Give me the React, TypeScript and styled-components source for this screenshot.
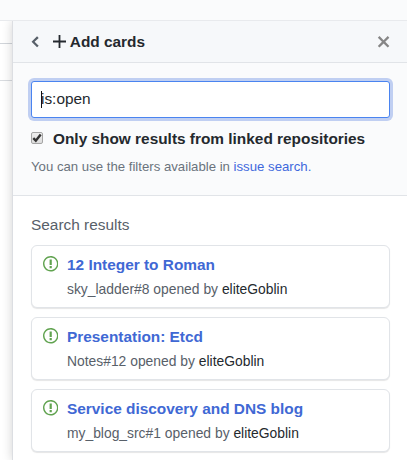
import React from "react";
import styled, { createGlobalStyle } from "styled-components";

const GlobalStyle = createGlobalStyle`
  * { box-sizing: border-box; }
  html, body { margin: 0; padding: 0; overflow: hidden; }
  body { font-family: "Liberation Sans", Arial, sans-serif; color: #24292e; background: #fff; }
`;

const Page = styled.div`
  display: flex;
  flex-direction: column;
  width: 407px;
  height: 460px;
  overflow: hidden;
`;

const TopStrip = styled.div`
  flex: none;
  height: 21px;
  background: #fafbfc;
  border-bottom: 1px solid #e8eaed;
`;

const Body = styled.div`
  display: flex;
  flex: 1;
  min-height: 0;
`;

const Board = styled.div`
  flex: none;
  width: 12px;
  padding-top: 22px;
`;

const BoardColumn = styled.div`
  height: 38px;
  border-top: 1px solid #d1d5da;
  border-bottom: 1px solid #d9dce0;
`;

const Pane = styled.aside`
  flex: 1;
  min-width: 0;
  background: #fff;
  border-left: 1px solid #dcdee2;
  box-shadow: 0 0 10px rgba(0, 0, 0, 0.18);
  clip-path: inset(0 0 0 -12px);
`;

const Header = styled.header`
  display: flex;
  align-items: center;
  height: 42px;
  padding: 0 17px 0 18px;
  background: #f6f8fa;
  border-bottom: 1px solid #e1e4e8;
`;

const IconButton = styled.button`
  display: flex;
  padding: 0;
  border: 0;
  background: none;
  color: #586069;
`;

const BackButton = styled(IconButton)`
  margin: 0 0.5px 0 -0.5px;
`;

const CloseButton = styled(IconButton)`
  margin-left: auto;
  color: #868686;
`;

const Title = styled.h1`
  display: flex;
  align-items: center;
  gap: 4px;
  margin: 0 0 0 13px;
  font-size: 15.4px;
  line-height: 22px;
  font-weight: 700;
`;

const SearchSection = styled.section`
  height: 133px;
  padding: 18px 16px 0 18px;
  background: #fafbfc;
  border-bottom: 1px solid #e1e4e8;
`;

const SearchField = styled.div`
  display: flex;
  align-items: center;
  width: 359px;
  height: 37px;
  padding: 0 9px 1px;
  background: #fff;
  border: 1px solid #4a84f0;
  border-radius: 3px;
  box-shadow: 0 0 0 3px #c0cff2;
  font-size: 15.4px;
`;

const Caret = styled.span`
  width: 1px;
  height: 17px;
  margin-right: -1px;
  background: #111;
`;

const CheckRow = styled.label`
  display: flex;
  align-items: center;
  gap: 10px;
  height: 22px;
  margin-top: 9px;
  font-size: 15.4px;
  font-weight: 700;
`;

const CheckLabel = styled.span`
  padding-top: 2px;
`;

const Checkbox = styled.span`
  display: flex;
  width: 12px;
  height: 12px;
  border: 1px solid #a5a5a5;
  border-radius: 2px;
  background: linear-gradient(#eee, #ddd);
`;

const Help = styled.p`
  margin: 9px 0 0;
  font-size: 13.2px;
  line-height: 18px;
  color: #6a737d;
`;

const Link = styled.a`
  color: #4068dc;
`;

const Results = styled.section`
  padding: 18px 16px 0 18px;
`;

const ResultsTitle = styled.h2`
  margin: 0 0 9px;
  font-size: 15.4px;
  line-height: 22px;
  font-weight: 400;
  color: #586069;
`;

const Card = styled.article`
  display: flex;
  width: 359px;
  height: 63px;
  margin-bottom: 9px;
  padding: 10px 11px;
  gap: 8.6px;
  background: #fff;
  border: 1px solid #e1e4e8;
  border-radius: 6px;
  box-shadow: 0 1px 1px rgba(0, 0, 0, 0.1);
`;

const IssueIcon = styled.svg`
  flex: none;
  margin-top: -1px;
  color: #61a350;
`;

const CardTitle = styled.div`
  font-size: 15.4px;
  line-height: 18px;
  font-weight: 700;
  color: #4068d4;
`;

const CardMeta = styled.div`
  margin-top: 6px;
  font-size: 13.86px;
  line-height: 18px;
  color: #586069;
`;

const Author = styled.span`
  color: #24292e;
`;

const items = [
  { title: "12 Integer to Roman", source: "sky_ladder#8" },
  { title: "Presentation: Etcd", source: "Notes#12" },
  { title: "Service discovery and DNS blog", source: "my_blog_src#1" },
];

const ChevronLeft = () => (
  <svg width="8.8" height="17.6" viewBox="0 0 8 16" fill="currentColor">
    <path d="M5.5 3L7 4.5 3.25 8 7 11.5 5.5 13l-5-5 5-5z" />
  </svg>
);

const Plus = () => (
  <svg width="13" height="13" viewBox="0 0 13 13" fill="none" stroke="#24292e" strokeWidth="1.8">
    <path d="M6.5 0v13M0 6.5h13" />
  </svg>
);

const Close = () => (
  <svg width="13.2" height="17.6" viewBox="0 0 12 16" fill="currentColor">
    <path d="M7.48 8l3.75 3.75-1.48 1.48L6 9.48l-3.75 3.75-1.48-1.48L4.52 8 .77 4.25l1.48-1.48L6 6.52l3.75-3.75 1.48 1.48L7.48 8z" />
  </svg>
);

const Check = () => (
  <svg width="10" height="10" viewBox="0 0 10 10" fill="none" stroke="#333" strokeWidth="2.4">
    <path d="M1.3 5.2l2.5 2.5L8.7 1.5" />
  </svg>
);

const IssueOpened = () => (
  <IssueIcon width="15.4" height="17.6" viewBox="0 0 14 16" fill="currentColor">
    <path
      fillRule="evenodd"
      d="M7 2.3c3.14 0 5.7 2.56 5.7 5.7s-2.56 5.7-5.7 5.7A5.71 5.71 0 0 1 1.3 8c0-3.14 2.56-5.7 5.7-5.7zM7 1C3.14 1 0 4.14 0 8s3.14 7 7 7 7-3.14 7-7-3.14-7-7-7zm1 3H6v5h2V4zm0 6H6v2h2v-2z"
    />
  </IssueIcon>
);

export default function App() {
  return (
    <Page>
      <GlobalStyle />
      <TopStrip />
      <Body>
        <Board>
          <BoardColumn />
        </Board>
        <Pane>
          <Header>
            <BackButton aria-label="Back">
              <ChevronLeft />
            </BackButton>
            <Title>
              <Plus />
              Add cards
            </Title>
            <CloseButton aria-label="Close">
              <Close />
            </CloseButton>
          </Header>
          <SearchSection>
            <SearchField>
              <Caret />
              is:open
            </SearchField>
            <CheckRow>
              <Checkbox>
                <Check />
              </Checkbox>
              <CheckLabel>Only show results from linked repositories</CheckLabel>
            </CheckRow>
            <Help>
              You can use the filters available in <Link>issue search.</Link>
            </Help>
          </SearchSection>
          <Results>
            <ResultsTitle>Search results</ResultsTitle>
            {items.map((item) => (
              <Card key={item.title}>
                <IssueOpened />
                <div>
                  <CardTitle>{item.title}</CardTitle>
                  <CardMeta>
                    {item.source} opened by <Author>eliteGoblin</Author>
                  </CardMeta>
                </div>
              </Card>
            ))}
          </Results>
        </Pane>
      </Body>
    </Page>
  );
}
